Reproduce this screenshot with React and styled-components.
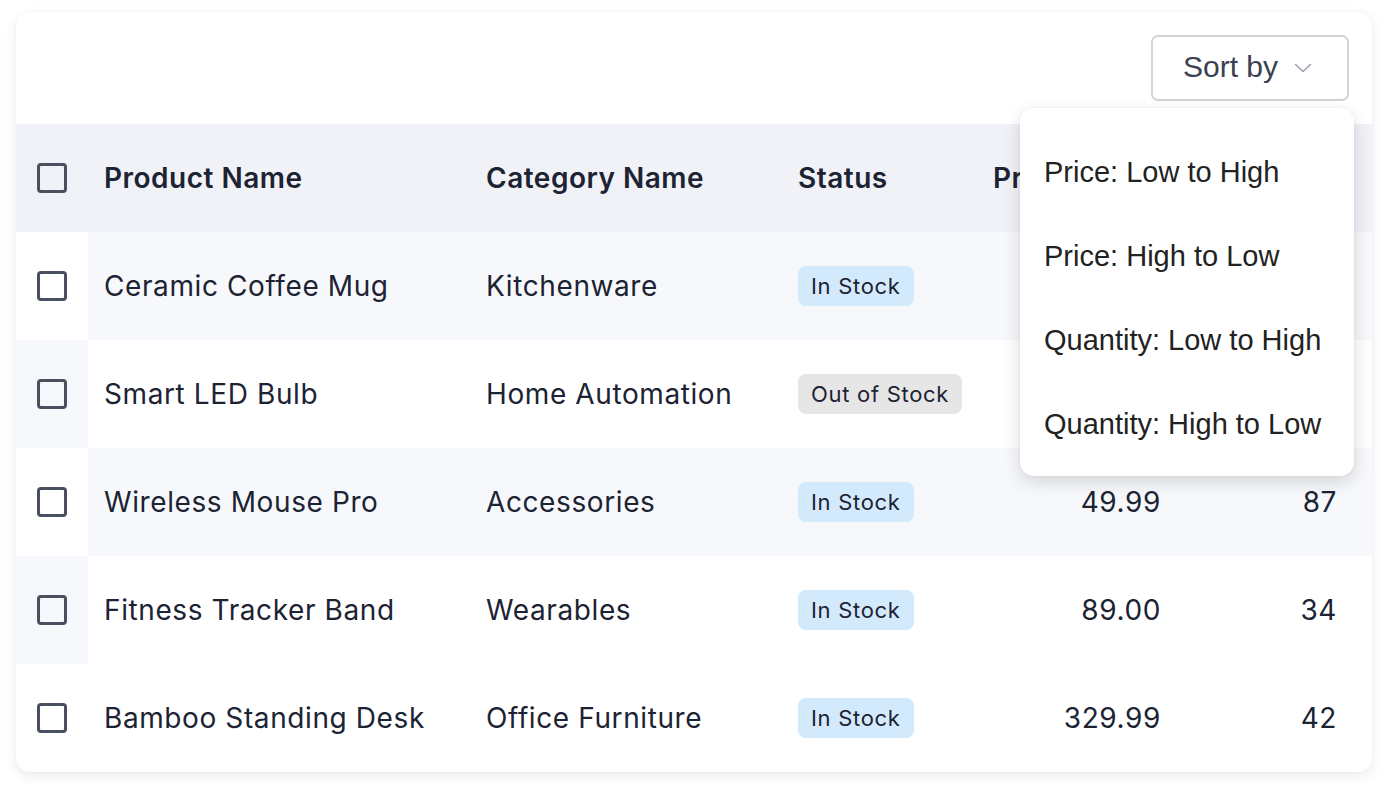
import styled, { createGlobalStyle } from 'styled-components';

const GlobalStyle = createGlobalStyle`
  html, body {
    margin: 0;
    padding: 0;
    background: #ffffff;
  }
  body {
    padding: 12px 16px;
    font-family: Inter, "Noto Sans", sans-serif;
    color: #1c2333;
  }
`;

const products = [
  { name: 'Ceramic Coffee Mug', category: 'Kitchenware', inStock: true, price: '', qty: '', shade: 'data' },
  { name: 'Smart LED Bulb', category: 'Home Automation', inStock: false, price: '', qty: '', shade: 'check' },
  { name: 'Wireless Mouse Pro', category: 'Accessories', inStock: true, price: '49.99', qty: '87', shade: 'data' },
  { name: 'Fitness Tracker Band', category: 'Wearables', inStock: true, price: '89.00', qty: '34', shade: 'check' },
  { name: 'Bamboo Standing Desk', category: 'Office Furniture', inStock: true, price: '329.99', qty: '42', shade: 'none' },
];

const sortOptions = [
  'Price: Low to High',
  'Price: High to Low',
  'Quantity: Low to High',
  'Quantity: High to Low',
];

const App = () => {
  return (
    <>
      <GlobalStyle />
      <Card>
        <Toolbar>
          <SortButton>
            Sort by
            <svg width="18" height="10" viewBox="0 0 18 10" fill="none" stroke="#9aa0aa" strokeWidth="1.5" strokeLinecap="round" strokeLinejoin="round">
              <path d="M1.5 1.5l7.5 7 7.5-7" />
            </svg>
          </SortButton>
        </Toolbar>
        <HeadRow>
          <CheckCell>
            <Checkbox />
          </CheckCell>
          <HeadCell>Product Name</HeadCell>
          <HeadCell>Category Name</HeadCell>
          <HeadCell>Status</HeadCell>
          <HeadCell>Price</HeadCell>
          <HeadCell $right>Quantity</HeadCell>
        </HeadRow>
        {products.map((p) => (
          <Row key={p.name}>
            <CheckCell $shaded={p.shade === 'check'}>
              <Checkbox />
            </CheckCell>
            <Cell $shaded={p.shade === 'data'}>{p.name}</Cell>
            <Cell $shaded={p.shade === 'data'}>{p.category}</Cell>
            <Cell $shaded={p.shade === 'data'}>
              <Badge $in={p.inStock}>{p.inStock ? 'In Stock' : 'Out of Stock'}</Badge>
            </Cell>
            <Cell $shaded={p.shade === 'data'} $right>{p.price}</Cell>
            <Cell $shaded={p.shade === 'data'} $right $last>{p.qty}</Cell>
          </Row>
        ))}
        <Menu>
          {sortOptions.map((o) => (
            <MenuItem key={o}>{o}</MenuItem>
          ))}
        </Menu>
      </Card>
    </>
  );
};

const Card = styled.div`
  position: relative;
  width: 1356px;
  background: #ffffff;
  border-radius: 14px;
  box-shadow: 0 4px 14px rgba(0, 0, 0, 0.08), 0 0 2px rgba(0, 0, 0, 0.06);
`;

const Toolbar = styled.div`
  height: 112px;
  display: flex;
  align-items: center;
  justify-content: flex-end;
  padding: 0 23px;
  box-sizing: border-box;
`;

const SortButton = styled.button`
  width: 198px;
  height: 66px;
  box-sizing: border-box;
  display: flex;
  align-items: center;
  gap: 16px;
  background: #fff;
  border: 2px solid #d2d4d8;
  border-radius: 7px;
  font-family: "Liberation Sans", Arial, sans-serif;
  font-size: 30px;
  color: #3a4150;
  padding: 0 0 2px 30px;
  svg {
    margin-top: 2px;
  }
`;

const grid = `
  display: grid;
  grid-template-columns: 72px 382px 312px 195px 200px 195px;
  height: 108px;
`;

const HeadRow = styled.div`
  ${grid}
  background: #f0f2f7;
  border-radius: 0;
`;

const Row = styled.div`
  ${grid}
`;

const CheckCell = styled.div`
  display: flex;
  align-items: center;
  justify-content: center;
  background: ${(p) => (p.$shaded ? '#f7f8fb' : 'transparent')};
`;

const Checkbox = styled.span`
  width: 24px;
  height: 24px;
  border: 3px solid #4a5060;
  border-radius: 4px;
  display: block;
`;

const HeadCell = styled.div`
  display: flex;
  align-items: center;
  justify-content: ${(p) => (p.$right ? 'flex-end' : 'flex-start')};
  padding: ${(p) => (p.$right ? '0 35px 0 16px' : '0 16px')};
  font-size: 28px;
  font-weight: 600;
  letter-spacing: 0.5px;
  white-space: nowrap;
  color: #1c2333;
`;

const Cell = styled.div`
  display: flex;
  align-items: center;
  justify-content: ${(p) => (p.$right ? 'flex-end' : 'flex-start')};
  padding: ${(p) => (p.$last ? '0 35px 0 16px' : '0 16px')};
  font-size: 28px;
  font-weight: 400;
  letter-spacing: 0.6px;
  white-space: nowrap;
  color: #1c2333;
  background: ${(p) => (p.$shaded ? '#f7f8fb' : 'transparent')};
`;

const Badge = styled.span`
  display: inline-flex;
  align-items: center;
  height: 40px;
  padding: 0 13px;
  border-radius: 8px;
  font-size: 22px;
  letter-spacing: 0.7px;
  white-space: nowrap;
  color: #1c2333;
  background: ${(p) => (p.$in ? '#d3e9fc' : '#e6e6e6')};
`;

const Menu = styled.div`
  position: absolute;
  left: 1004px;
  top: 96px;
  width: 334px;
  padding: 22px 0 10px;
  box-sizing: border-box;
  background: #ffffff;
  border-radius: 14px;
  box-shadow: 0 6px 18px rgba(0, 0, 0, 0.14), 0 0 3px rgba(0, 0, 0, 0.06);
`;

const MenuItem = styled.div`
  height: 84px;
  display: flex;
  align-items: center;
  padding: 0 24px;
  font-family: "Liberation Sans", Arial, sans-serif;
  font-size: 29px;
  color: #222222;
`;

export default App;
